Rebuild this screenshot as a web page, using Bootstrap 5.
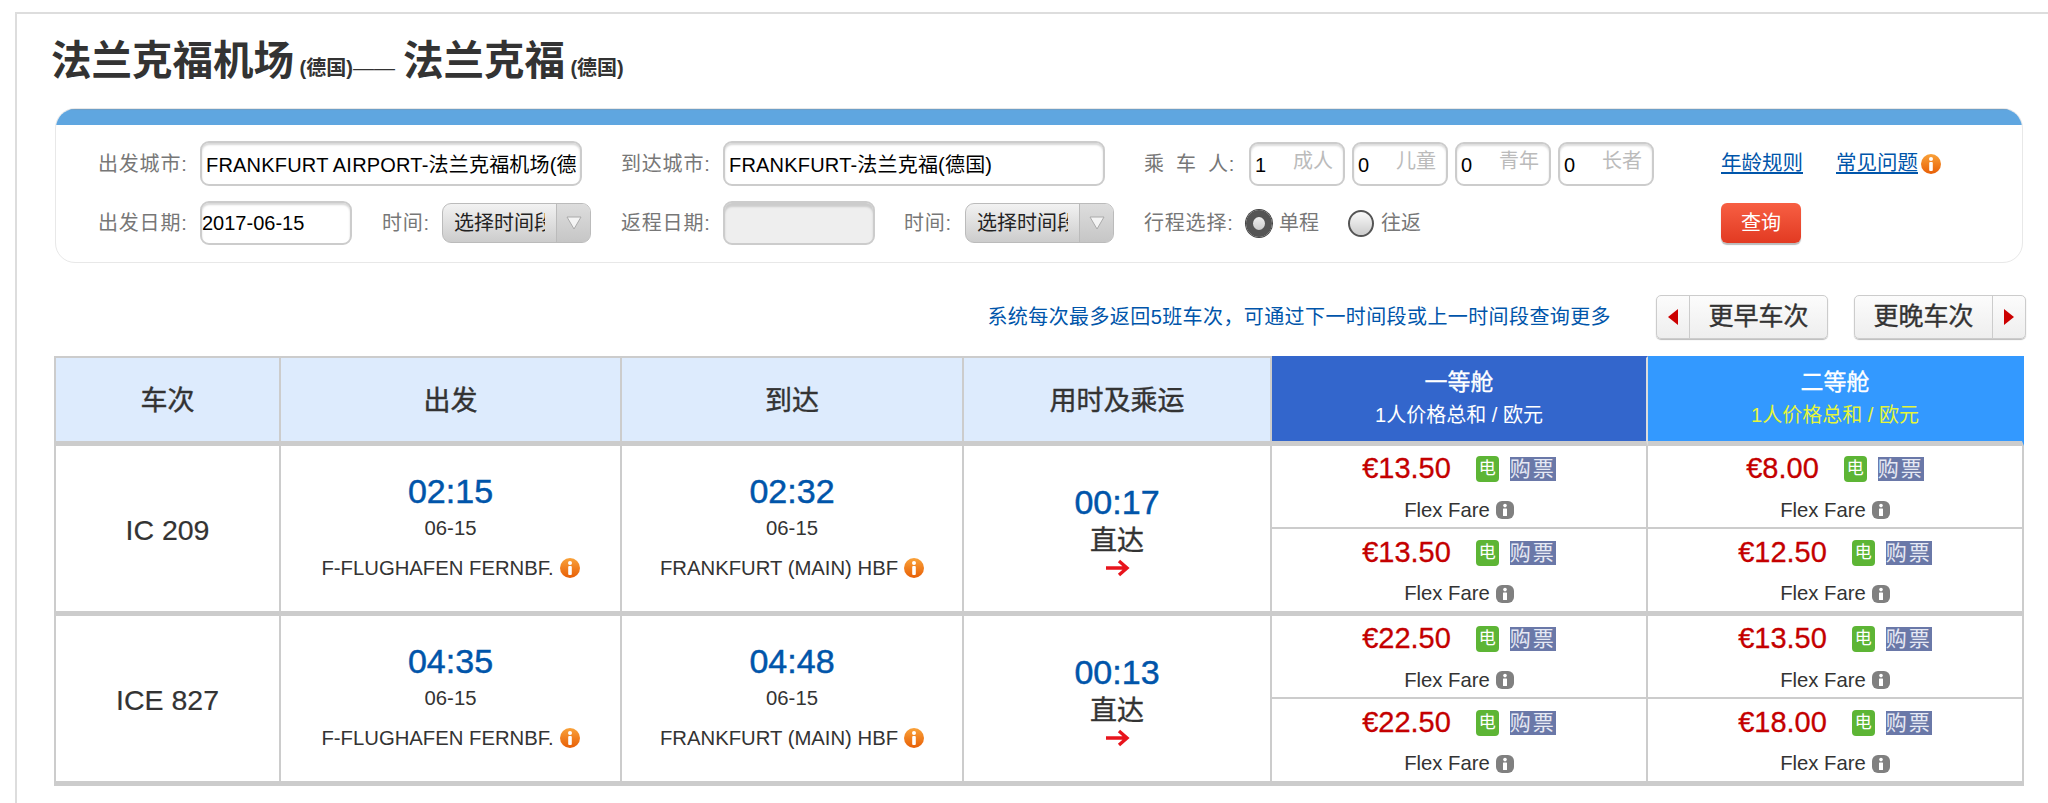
<!DOCTYPE html>
<html lang="zh-CN">
<head>
<meta charset="utf-8">
<title>法兰克福机场 — 法兰克福</title>
<link href="https://cdn.jsdelivr.net/npm/bootstrap@5.3.0/dist/css/bootstrap.min.css" rel="stylesheet">
<style>
html,body{height:100%;}
body{background:#fff;color:#333;font-family:"Liberation Sans","Noto Sans CJK SC",sans-serif;font-size:20px;padding:12px 0 0 15px;overflow:hidden;}
.page-frame{border-top:2px solid #ddd;border-left:2px solid #ddd;height:calc(100vh - 12px);padding:16px 0 0 37px;}
.page-body{width:1970px;}
.route-title{font-size:40.5px;height:60px;line-height:62px;font-weight:700;color:#333;margin:0 0 18px -3px;font-family:inherit;white-space:nowrap;overflow:visible;}
.route-title small{font-size:20px;font-weight:700;line-height:1;}
.route-title .dash{font-size:21px;font-weight:400;line-height:1;margin-right:8px;}
.search-panel{width:1968px;margin-left:1px;border:1px solid #e8e8e8;border-radius:20px;overflow:hidden;height:155px;}
.panel-stripe{height:16px;background:#5fa6e0;box-shadow:inset 0 1px 1px #6f9fc6;}
.search-grid{display:grid;grid-template-columns:523px 523px 577px 1fr;grid-template-rows:45px 44px;row-gap:15px;padding:16px 0 0 42px;}
.field-label{color:#777;font-size:20px;line-height:28px;white-space:nowrap;flex:none;letter-spacing:.8px;}
.w-city{width:102px;}.w-time{width:60px;}.w-time-wide{width:61px;}.w-pax{width:105px;}.w-trip{width:102px;}
.spaced{letter-spacing:12px;}
.text-box{height:100%;border:2px solid #ccc;border-radius:9px;box-shadow:inset 0 2px 2px #d8d8d8;font-family:inherit;font-size:20px;color:#000;background:#fff;outline:0;}
.box-city{width:382px;padding:0 4px;letter-spacing:.2px;}
.box-date{width:152px;padding:0;}
.box-off{background:#eee;box-shadow:inset 0 4px 2px #ccc;}
.time-pick{width:149px;height:40px;border:1px solid #bbb;border-radius:9px;background:linear-gradient(#f2f2f2,#ccc);overflow:hidden;}
.box-gap{margin-right:30px;}
.box-gap-alt{margin-right:29px;}
.time-pick-text{width:113px;flex:none;padding-left:11px;overflow:hidden;white-space:nowrap;color:#222;}
.time-pick-text span{display:block;width:91px;overflow:hidden;}
.time-pick-arrow{flex:1;height:100%;background:linear-gradient(#ddd,#c6c6c6);border-left:1px solid #bbb;}
.pax-box{width:96px;height:44px;border:2px solid #ccc;border-radius:9px;box-shadow:inset 0 2px 2px #ddd;padding:0 10px 0 4px;margin-right:7px;color:#000;font-size:20px;}
.pax-box em{font-style:normal;color:#bbb;margin-top:-5px;}
.pax-box b{font-weight:400;margin-top:3px;}
.trip-radio.form-check-input{appearance:none;width:26px;height:27px;margin:0 7px 0 0;border-radius:50%;border:2px solid #555;background:linear-gradient(#fafafa,#ccc);flex:none;}
.trip-radio.form-check-input:checked{border:7px solid #555;background:linear-gradient(#eee,#ccc);box-shadow:0 0 0 1px #444;}
.trip-text{color:#777;margin-right:29px;}
.help-link{color:#0055aa;text-decoration:underline;white-space:nowrap;font-size:20.5px;}
.help-link+.help-link{margin-left:33px;}
.tip.tip-near{margin-left:3px;}
.query-btn{width:80px;height:40px;padding:0;background:linear-gradient(#f75f43,#e23a22);color:#fff;font-size:20px;border:0;border-radius:6px;box-shadow:0 2px 1px #bbb;}
.result-bar{margin:32px -2px 17px 0;height:44px;}
.result-note{color:#0055aa;font-size:20px;letter-spacing:.4px;margin-right:45px;white-space:nowrap;}
.page-step{width:172px;height:44px;border:1px solid #ccc;border-radius:5px;background:linear-gradient(#fcfcfc,#eee);box-shadow:0 1px 1px #bbb;color:#333;font-size:25px;-webkit-text-stroke:.4px #333;padding:0;overflow:hidden;}
.page-step+.page-step{margin-left:26px;}
.step-main{flex:1;text-align:center;}
.step-arrow{width:33px;height:100%;flex:none;}
.step-arrow.earlier{border-right:1px solid #ccc;}
.step-arrow.later{border-left:1px solid #ccc;}
.fare-grid{table-layout:fixed;width:1970px;margin:0;border-collapse:separate;border-spacing:0;border-left:2px solid #ccc;}
.fare-grid>:not(caption)>*>*{padding:0;border:0;border-right:2px solid #ccc;text-align:center;vertical-align:middle;color:#333;}
.fare-grid>thead>tr>th{height:90px;padding-top:3px;border-top:2px solid #ccc;border-bottom:5px solid #ccc;background:#ddebfd;font-size:27px;font-weight:400;-webkit-text-stroke:.4px #333;}
.fare-grid>thead>tr>th.cabin-a{background:#3366cc;color:#fff;border-top-color:#3366cc;border-right-color:#ddd;padding:0 0 3px;-webkit-text-stroke:0;}
.fare-grid>thead>tr>th.cabin-b{background:#3399ff;color:#fff;border-top-color:#3399ff;border-right-color:#3399ff;padding:0 0 3px;-webkit-text-stroke:0;}
.cabin-name{font-size:23px;line-height:34px;-webkit-text-stroke:.3px #fff;}
.cabin-sub{font-size:20px;font-weight:400;line-height:32px;}
.cabin-b .cabin-sub{color:#e5f53a;}
.fare-grid>tbody>tr>td.span-cell{border-bottom:5px solid #ccc;}
.fare-grid>tbody>tr>td.fare-up{height:83px;border-bottom:2px solid #ccc;}
.fare-grid>tbody>tr>td.fare-down{height:87px;border-bottom:5px solid #ccc;}
.fare-grid>tbody>tr>td.train-no{font-size:28.5px;padding-top:3px;-webkit-text-stroke:.2px #333;}
.clock{font-size:34px;line-height:44px;color:#0055aa;-webkit-text-stroke:.5px #0055aa;}
.date-line{font-size:20.3px;line-height:30px;}
.stop-line{font-size:20.3px;line-height:30px;margin-top:10px;margin-bottom:5px;}
.direct{font-size:27px;line-height:34px;-webkit-text-stroke:.4px #333;}
.price-line{height:40px;margin-top:1px;}
.price{font-size:29px;color:#c40000;margin-right:25px;-webkit-text-stroke:.3px #c40000;}
.e-mark{width:23px;height:26px;border-radius:4px;background:#5db535;color:#fff;font-size:17px;line-height:26px;margin-right:11px;}
.buy-mark{width:46px;height:24px;background:#6a78a8;color:#e6e9f4;font-size:21px;line-height:24px;letter-spacing:2px;white-space:nowrap;text-align:left;}
.flex-line{height:30px;margin-top:6px;font-size:20.3px;}
.tip{width:20px;height:20px;margin-left:6px;flex:none;}
.tip-grey{width:18px;height:18px;}
.col-a{width:225px;}.col-b{width:341px;}.col-c{width:342px;}.col-d{width:308px;}.col-e{width:376px;}.col-f{width:376px;}
</style>
</head>
<body>
<svg width="0" height="0" class="d-block position-absolute">
  <defs>
    <linearGradient id="og" x1="0" y1="0" x2="0" y2="1"><stop offset="0" stop-color="#f9a23a"/><stop offset="1" stop-color="#e85f06"/></linearGradient>
    <symbol id="tip-o" viewBox="0 0 20 20"><circle cx="10" cy="10" r="10" fill="url(#og)"/><circle cx="10" cy="5" r="2" fill="#fff"/><rect x="8.2" y="8" width="3.6" height="9" rx="1" fill="#fff"/></symbol>
    <symbol id="tip-g" viewBox="0 0 18 18"><rect width="18" height="18" rx="6" fill="#808080"/><circle cx="9" cy="4.6" r="1.8" fill="#fff"/><rect x="7" y="7.5" width="4" height="7.5" rx=".6" fill="#fff"/></symbol>
    <symbol id="go" viewBox="0 0 25 17"><path d="M1 8.5H22M14 1.5l8 7-8 7" fill="none" stroke="#e8141c" stroke-width="3.4"/></symbol>
  </defs>
</svg>
<div class="page-frame">
<div class="page-body">
  <h1 class="route-title">法兰克福机场<small> (德国)</small><span class="dash">——</span>法兰克福<small> (德国)</small></h1>

  <div class="search-panel">
    <div class="panel-stripe"></div>
    <div class="search-grid">
      <div class="d-flex align-items-center"><span class="field-label w-city">出发城市:</span><input class="text-box box-city" value="FRANKFURT AIRPORT-法兰克福机场(德国)"></div>
      <div class="d-flex align-items-center"><span class="field-label w-city">到达城市:</span><input class="text-box box-city" value="FRANKFURT-法兰克福(德国)"></div>
      <div class="d-flex align-items-center"><span class="field-label w-pax"><span class="spaced">乘车</span>人:</span>
        <div class="pax-box d-flex justify-content-between align-items-center"><b>1</b><em>成人</em></div>
        <div class="pax-box d-flex justify-content-between align-items-center"><b>0</b><em>儿童</em></div>
        <div class="pax-box d-flex justify-content-between align-items-center"><b>0</b><em>青年</em></div>
        <div class="pax-box d-flex justify-content-between align-items-center"><b>0</b><em>长者</em></div>
      </div>
      <div class="d-flex align-items-center"><a class="help-link" href="#">年龄规则</a><a class="help-link" href="#">常见问题</a><svg class="tip tip-near"><use href="#tip-o"/></svg></div>

      <div class="d-flex align-items-center"><span class="field-label w-city">出发日期:</span><input class="text-box box-date box-gap" value="2017-06-15"><span class="field-label w-time">时间:</span>
        <div class="time-pick d-flex align-items-center"><div class="time-pick-text"><span>选择时间段</span></div><div class="time-pick-arrow d-flex align-items-center justify-content-center"><svg width="16" height="14" viewBox="0 0 16 14"><path d="M1 1h14L8 13z" fill="#f4f4f4" stroke="#aaa"/></svg></div></div>
      </div>
      <div class="d-flex align-items-center"><span class="field-label w-city">返程日期:</span><input class="text-box box-date box-off box-gap-alt" disabled><span class="field-label w-time-wide">时间:</span>
        <div class="time-pick d-flex align-items-center"><div class="time-pick-text"><span>选择时间段</span></div><div class="time-pick-arrow d-flex align-items-center justify-content-center"><svg width="16" height="14" viewBox="0 0 16 14"><path d="M1 1h14L8 13z" fill="#f4f4f4" stroke="#aaa"/></svg></div></div>
      </div>
      <div class="d-flex align-items-center"><span class="field-label w-trip">行程选择:</span>
        <input class="form-check-input trip-radio" type="radio" name="trip" checked><span class="trip-text">单程</span>
        <input class="form-check-input trip-radio" type="radio" name="trip"><span class="trip-text">往返</span>
      </div>
      <div class="d-flex align-items-center"><button class="btn query-btn" type="button">查询</button></div>
    </div>
  </div>

  <div class="result-bar d-flex justify-content-end align-items-center">
    <span class="result-note">系统每次最多返回5班车次，可通过下一时间段或上一时间段查询更多</span>
    <button class="btn page-step d-flex align-items-center" type="button"><span class="step-arrow earlier d-flex align-items-center justify-content-center"><svg width="10" height="16" viewBox="0 0 10 16"><path d="M10 0v16L0 8z" fill="#c00"/></svg></span><span class="step-main">更早车次</span></button>
    <button class="btn page-step d-flex align-items-center" type="button"><span class="step-main">更晚车次</span><span class="step-arrow later d-flex align-items-center justify-content-center"><svg width="10" height="16" viewBox="0 0 10 16"><path d="M0 0v16L10 8z" fill="#c00"/></svg></span></button>
  </div>

  <table class="table fare-grid">
    <colgroup><col class="col-a"><col class="col-b"><col class="col-c"><col class="col-d"><col class="col-e"><col class="col-f"></colgroup>
    <thead>
      <tr>
        <th>车次</th><th>出发</th><th>到达</th><th>用时及乘运</th>
        <th class="cabin-a"><div class="cabin-name">一等舱</div><div class="cabin-sub">1人价格总和 / 欧元</div></th>
        <th class="cabin-b"><div class="cabin-name">二等舱</div><div class="cabin-sub">1人价格总和 / 欧元</div></th>
      </tr>
    </thead>
    <tbody>
      <tr>
        <td rowspan="2" class="span-cell train-no">IC 209</td>
        <td rowspan="2" class="span-cell"><div class="clock">02:15</div><div class="date-line">06-15</div><div class="stop-line d-flex justify-content-center align-items-center">F-FLUGHAFEN FERNBF.<svg class="tip"><use href="#tip-o"/></svg></div></td>
        <td rowspan="2" class="span-cell"><div class="clock">02:32</div><div class="date-line">06-15</div><div class="stop-line d-flex justify-content-center align-items-center">FRANKFURT (MAIN) HBF<svg class="tip"><use href="#tip-o"/></svg></div></td>
        <td rowspan="2" class="span-cell"><div class="clock">00:17</div><div class="direct">直达</div><div class="d-flex justify-content-center"><svg width="25" height="20"><use href="#go"/></svg></div></td>
        <td class="fare-up"><div class="price-line d-flex justify-content-center align-items-center"><span class="price">€13.50</span><span class="e-mark">电</span><span class="buy-mark">购票</span></div><div class="flex-line d-flex justify-content-center align-items-center">Flex Fare<svg class="tip tip-grey"><use href="#tip-g"/></svg></div></td>
        <td class="fare-up"><div class="price-line d-flex justify-content-center align-items-center"><span class="price">€8.00</span><span class="e-mark">电</span><span class="buy-mark">购票</span></div><div class="flex-line d-flex justify-content-center align-items-center">Flex Fare<svg class="tip tip-grey"><use href="#tip-g"/></svg></div></td>
      </tr>
      <tr>
        <td class="fare-down"><div class="price-line d-flex justify-content-center align-items-center"><span class="price">€13.50</span><span class="e-mark">电</span><span class="buy-mark">购票</span></div><div class="flex-line d-flex justify-content-center align-items-center">Flex Fare<svg class="tip tip-grey"><use href="#tip-g"/></svg></div></td>
        <td class="fare-down"><div class="price-line d-flex justify-content-center align-items-center"><span class="price">€12.50</span><span class="e-mark">电</span><span class="buy-mark">购票</span></div><div class="flex-line d-flex justify-content-center align-items-center">Flex Fare<svg class="tip tip-grey"><use href="#tip-g"/></svg></div></td>
      </tr>
      <tr>
        <td rowspan="2" class="span-cell train-no">ICE 827</td>
        <td rowspan="2" class="span-cell"><div class="clock">04:35</div><div class="date-line">06-15</div><div class="stop-line d-flex justify-content-center align-items-center">F-FLUGHAFEN FERNBF.<svg class="tip"><use href="#tip-o"/></svg></div></td>
        <td rowspan="2" class="span-cell"><div class="clock">04:48</div><div class="date-line">06-15</div><div class="stop-line d-flex justify-content-center align-items-center">FRANKFURT (MAIN) HBF<svg class="tip"><use href="#tip-o"/></svg></div></td>
        <td rowspan="2" class="span-cell"><div class="clock">00:13</div><div class="direct">直达</div><div class="d-flex justify-content-center"><svg width="25" height="20"><use href="#go"/></svg></div></td>
        <td class="fare-up"><div class="price-line d-flex justify-content-center align-items-center"><span class="price">€22.50</span><span class="e-mark">电</span><span class="buy-mark">购票</span></div><div class="flex-line d-flex justify-content-center align-items-center">Flex Fare<svg class="tip tip-grey"><use href="#tip-g"/></svg></div></td>
        <td class="fare-up"><div class="price-line d-flex justify-content-center align-items-center"><span class="price">€13.50</span><span class="e-mark">电</span><span class="buy-mark">购票</span></div><div class="flex-line d-flex justify-content-center align-items-center">Flex Fare<svg class="tip tip-grey"><use href="#tip-g"/></svg></div></td>
      </tr>
      <tr>
        <td class="fare-down"><div class="price-line d-flex justify-content-center align-items-center"><span class="price">€22.50</span><span class="e-mark">电</span><span class="buy-mark">购票</span></div><div class="flex-line d-flex justify-content-center align-items-center">Flex Fare<svg class="tip tip-grey"><use href="#tip-g"/></svg></div></td>
        <td class="fare-down"><div class="price-line d-flex justify-content-center align-items-center"><span class="price">€18.00</span><span class="e-mark">电</span><span class="buy-mark">购票</span></div><div class="flex-line d-flex justify-content-center align-items-center">Flex Fare<svg class="tip tip-grey"><use href="#tip-g"/></svg></div></td>
      </tr>
    </tbody>
  </table>
</div>
</div>
<script src="https://cdn.jsdelivr.net/npm/bootstrap@5.3.0/dist/js/bootstrap.bundle.min.js"></script>
</body>
</html>
